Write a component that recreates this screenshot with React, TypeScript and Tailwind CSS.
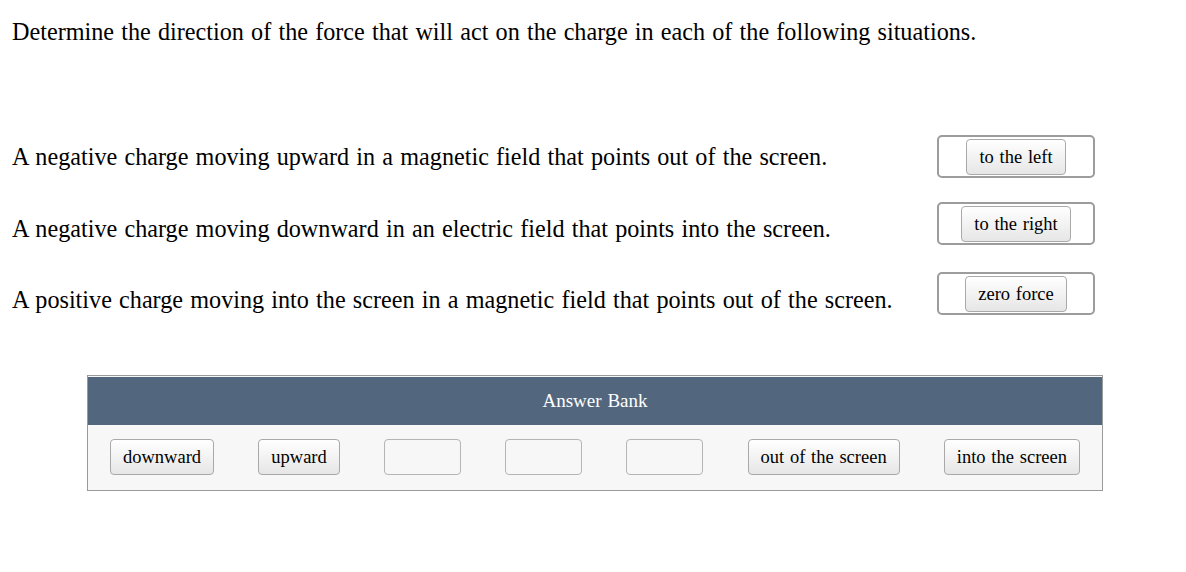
const serif = { fontFamily: '"Liberation Serif", "Times New Roman", serif' };

const rows = [
  {
    text: "A negative charge moving upward in a magnetic field that points out of the screen.",
    answer: "to the left",
    pad: "pt-[9px]",
  },
  {
    text: "A negative charge moving downward in an electric field that points into the screen.",
    answer: "to the right",
    pad: "pt-[14px]",
  },
  {
    text: "A positive charge moving into the screen in a magnetic field that points out of the screen.",
    answer: "zero force",
    pad: "pt-[15px]",
  },
];

const bank: (string | null)[] = [
  "downward",
  "upward",
  null,
  null,
  null,
  "out of the screen",
  "into the screen",
];

function Chip({ label }: { label: string }) {
  return (
    <div className="h-[36px] px-[12px] flex items-center rounded-[4px] border border-[#a9a9a9] bg-gradient-to-b from-white to-[#e6e6e6] text-[18.5px] text-black leading-none whitespace-nowrap">
      {label}
    </div>
  );
}

function EmptySlot() {
  return <div className="h-[36px] w-[77px] rounded-[4px] border border-[#b5b5b5] bg-[#f7f7f7]" />;
}

export default function App() {
  return (
    <div className="w-[1186px] h-[572px] bg-white text-black [word-spacing:0.07em]" style={serif}>
      <div className="pl-[12px] pt-[19px]">
        <p className="text-[24.2px] leading-[26px]">
          Determine the direction of the force that will act on the charge in each of the following
          situations.
        </p>

        <div className="mt-[90px] flex flex-col">
          {rows.map((r, i) => (
            <div
              key={i}
              className={`flex items-start ${i === 1 ? "mt-[24px]" : i === 2 ? "mt-[27px]" : ""}`}
            >
              <p className={`w-[925px] flex-none text-[24.2px] leading-[26px] ${r.pad}`}>{r.text}</p>
              <div className="w-[158px] h-[43px] flex-none rounded-[5px] border-2 border-[#9c9c9c] flex justify-center pt-[2px]">
                <Chip label={r.answer} />
              </div>
            </div>
          ))}
        </div>
      </div>

      <div className="ml-[87px] mt-[60px] w-[1016px] h-[116px] border border-[#9a9a9a] bg-[#f7f7f7] flex flex-col">
        <div className="mt-[1px] h-[48px] bg-[#52667e] flex items-center justify-center text-white text-[19px]">
          Answer Bank
        </div>
        <div className="flex-1 flex items-center justify-between px-[22px] pb-[1px]">
          {bank.map((b, i) => (b ? <Chip key={i} label={b} /> : <EmptySlot key={i} />))}
        </div>
      </div>
    </div>
  );
}
